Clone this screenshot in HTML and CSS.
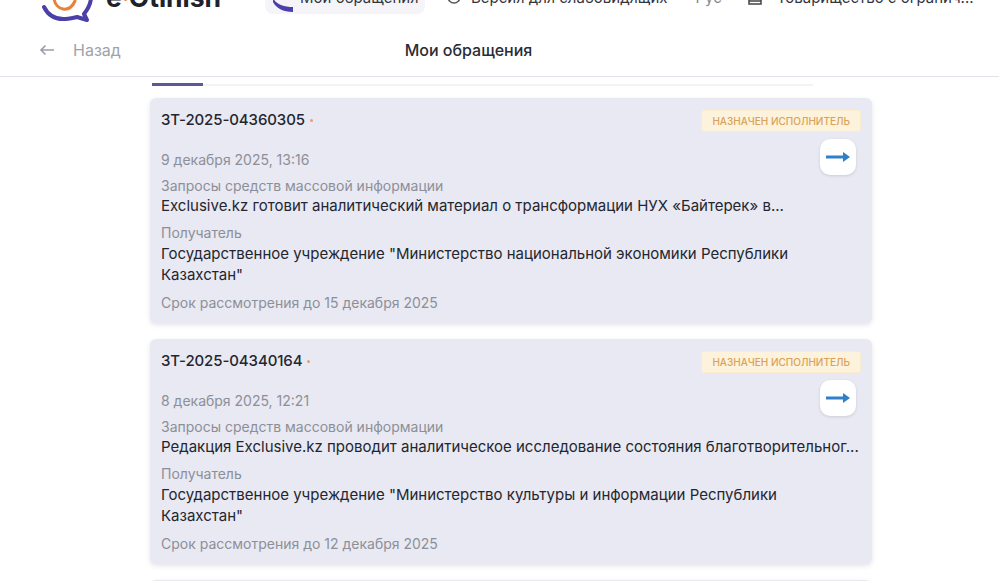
FILE: index.html
```html
<!DOCTYPE html>
<html lang="ru">
  <head>
    <meta charset="UTF-8" />
    <title>Мои обращения</title>
    <link rel="stylesheet" href="styles.css">
  </head>
  <body>
    <header class="topbar">
      <div class="logo">
        <svg class="logo-icon" width="52" height="32" viewBox="0 0 52 32" fill="none">
          <path d="M3 17C7 25 14 29 22 29C27 29 31 28 36 27L46 30L43 24C47 19 50 14 50 7" stroke="#4b3fa8" stroke-width="4" stroke-linecap="round" stroke-linejoin="round"/>
          <path d="M13 9C15 20 28 24 34 11" stroke="#e8823a" stroke-width="3" stroke-linecap="round"/>
        </svg>
        <span class="logo-text">e<i class="logo-dot"></i>Otinish</span>
      </div>
      <nav class="topnav">
        <a class="nav-item nav-active">
          <svg width="20" height="30" viewBox="0 0 20 30"><path d="M0 16C3 22 10 25 20 25V30C10 30 3 26 0 20z" fill="#4b3fa8"/></svg>
          Мои обращения
        </a>
        <a class="nav-item nav-eye">
          <svg width="14" height="14" viewBox="0 0 14 14" fill="none"><circle cx="7" cy="7" r="6" stroke="#555" stroke-width="1.500"/></svg>
          Версия для слабовидящих
        </a>
        <a class="nav-item nav-lang">Рус</a>
        <a class="nav-item nav-org">
          <svg width="16" height="16" viewBox="0 0 16 16" fill="none"><path d="M2 15V7h12v8zM5 7V2h6v5M2 12h12" stroke="#444" stroke-width="1.500"/></svg>
          Товарищество с огранич...
        </a>
      </nav>
    </header>

    <div class="subbar">
      <a class="back">
        <svg width="16" height="12" viewBox="0 0 16 12" fill="none"><path d="M15 6H2M6.500 1.500 2 6l4.500 4.500" stroke="#9b9ea6" stroke-width="1.600"/></svg>
        Назад
      </a>
      <h1 class="page-title">Мои обращения</h1>
    </div>

    <main class="content">
      <div class="tabs"><div class="tab-active"></div></div>

      <article class="card">
        <div class="card-head">
          <div class="card-num">ЗТ-2025-04360305 <i class="dot"></i></div>
          <div class="status">Назначен исполнитель</div>
        </div>
        <div class="card-date-row">
          <div class="muted">9 декабря 2025, 13:16</div>
          <button class="go">
            <svg width="24" height="12" viewBox="0 0 24 12"><path d="M0 6h19" stroke="#2f80c8" stroke-width="3"/><path d="M17 1 24 6l-7 5z" fill="#2f80c8"/></svg>
          </button>
        </div>
        <div class="muted line-type">Запросы средств массовой информации</div>
        <div class="main-text">Exclusive.kz готовит аналитический материал о трансформации НУХ «Байтерек» в...</div>
        <div class="muted line-to">Получатель</div>
        <div class="main-text recipient">Государственное учреждение "Министерство национальной экономики Республики Казахстан"</div>
        <div class="muted line-term">Срок рассмотрения до 15 декабря 2025</div>
      </article>

      <article class="card">
        <div class="card-head">
          <div class="card-num">ЗТ-2025-04340164 <i class="dot"></i></div>
          <div class="status">Назначен исполнитель</div>
        </div>
        <div class="card-date-row">
          <div class="muted">8 декабря 2025, 12:21</div>
          <button class="go">
            <svg width="24" height="12" viewBox="0 0 24 12"><path d="M0 6h19" stroke="#2f80c8" stroke-width="3"/><path d="M17 1 24 6l-7 5z" fill="#2f80c8"/></svg>
          </button>
        </div>
        <div class="muted line-type">Запросы средств массовой информации</div>
        <div class="main-text">Редакция Exclusive.kz проводит аналитическое исследование состояния благотворительног...</div>
        <div class="muted line-to">Получатель</div>
        <div class="main-text recipient">Государственное учреждение "Министерство культуры и информации Республики Казахстан"</div>
        <div class="muted line-term">Срок рассмотрения до 12 декабря 2025</div>
      </article>

      <article class="card card-next"></article>
    </main>
  </body>
</html>
```

FILE: styles.css
```css
html,
body {
  height: 100%;
}
body {
  margin: 0;
  font-family: Inter, "Liberation Sans", sans-serif;
  font-size: 14px;
  color: #2a2c36;
  background-color: white;
  overflow: hidden;
}

.topbar {
  display: flex;
  align-items: flex-end;
  height: 23px;
  padding-left: 41px;
  overflow: hidden;
}
.logo {
  display: flex;
  align-items: flex-end;
  width: 224px;
  flex-shrink: 0;
}
.logo-icon {
  margin-right: 13px;
  margin-bottom: 1px;
}
.logo-text {
  font-size: 26.500px;
  line-height: 32px;
  font-weight: 700;
  color: #20212b;
  margin-bottom: 10px;
}
.logo-dot {
  display: inline-block;
  width: 3px;
  height: 3px;
  margin: 0 2px 6px;
  border-radius: 50%;
  background-color: #e8823a;
}

.topnav {
  display: flex;
  align-items: flex-end;
  font-size: 15px;
  color: #33353f;
  white-space: nowrap;
}
.nav-item {
  display: flex;
  align-items: center;
  height: 34px;
  margin-bottom: 9px;
}
.nav-active {
  box-sizing: border-box;
  width: 160px;
  padding-left: 8px;
  margin-right: 22px;
  gap: 7px;
  border-radius: 8px;
  background-color: #f5f5f9;
}
.nav-eye {
  gap: 10px;
  margin-right: 28px;
}
.nav-lang {
  margin-right: 25px;
  color: #888;
}
.nav-org {
  gap: 14px;
}

.subbar {
  position: relative;
  box-sizing: border-box;
  display: flex;
  align-items: center;
  justify-content: center;
  height: 54px;
  padding-top: 1px;
  border-bottom: 1px solid #e2e3e8;
}
.back {
  position: absolute;
  left: 39px;
  display: flex;
  align-items: center;
  gap: 18px;
  font-size: 16px;
  color: #a0a2a8;
}
.page-title {
  margin: 0 62px 0 0;
  font-size: 16px;
  font-weight: 500;
  color: #2a2c36;
}

.content {
  width: 722px;
  margin-left: 150px;
}
.tabs {
  width: 661px;
  height: 3px;
  margin: 6px 0 12px 2px;
  background: linear-gradient(#fff 1px, #f3f3f6 1px);
}
.tab-active {
  width: 51px;
  height: 3px;
  background-color: #5c5a94;
}

.card {
  box-sizing: border-box;
  height: 225px;
  margin-bottom: 16px;
  padding: 12px 11px 0 11px;
  border-radius: 6px;
  background-color: #e8e9f2;
  box-shadow: 0 2px 5px rgba(40, 40, 70, 0.12);
}
.card-next {
  margin-bottom: 0;
}
.card-head {
  display: flex;
  justify-content: space-between;
  align-items: flex-start;
}
.card-num {
  font-size: 15px;
  line-height: 20px;
  font-weight: 500;
  letter-spacing: -0.1px;
  color: #24262f;
}
.dot {
  display: inline-block;
  width: 3px;
  height: 3px;
  margin: 0 0 3px 1px;
  border-radius: 50%;
  background-color: #e8a070;
}
.status {
  box-sizing: border-box;
  height: 22px;
  padding: 0 10px;
  border: 1px solid #fbeccd;
  border-radius: 3px;
  background-color: #fdf3dc;
  color: #d9a25a;
  font-size: 10px;
  line-height: 20px;
  font-weight: 500;
  text-transform: uppercase;
}
.card-date-row {
  display: flex;
  justify-content: space-between;
  align-items: flex-start;
  height: 40px;
  margin-top: -1px;
}
.card-date-row .muted {
  margin-top: 20px;
}
.go {
  width: 36px;
  height: 36px;
  margin: 8px 5px 0 0;
  padding: 0;
  border: none;
  border-radius: 10px;
  background-color: white;
  box-shadow: 0 1px 3px rgba(40, 40, 70, 0.15);
  display: flex;
  align-items: center;
  justify-content: center;
}
.muted {
  color: #8d8f98;
  font-size: 14px;
  line-height: 18px;
}
.main-text {
  color: #24262f;
  font-size: 15px;
  line-height: 21px;
  white-space: nowrap;
}
.line-type {
  margin-top: 6px;
}
.line-to {
  margin-top: 8px;
}
.recipient {
  margin-top: 1px;
  white-space: normal;
  width: 660px;
}
.line-term {
  margin-top: 9px;
}
```
